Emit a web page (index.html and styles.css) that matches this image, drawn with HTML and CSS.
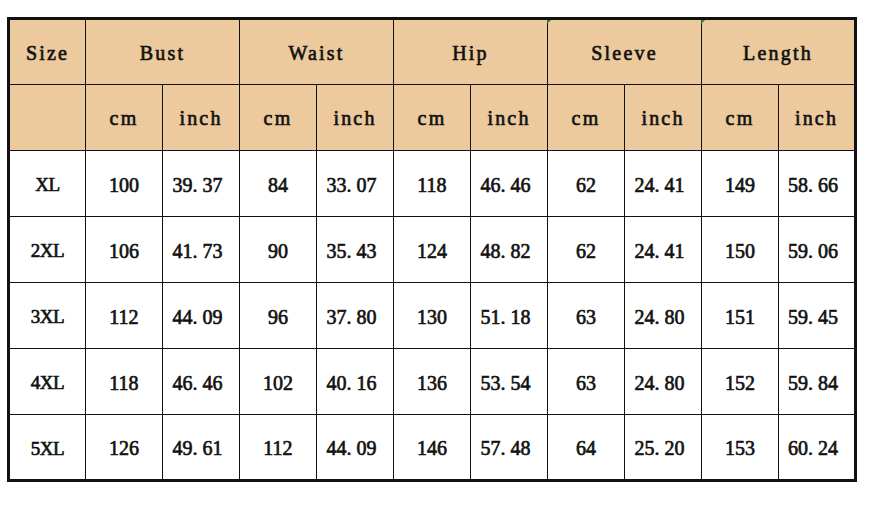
FILE: index.html
```html
<!DOCTYPE html>
<html lang="en">
<head>
<meta charset="utf-8">
<title>Size chart</title>
<link rel="stylesheet" href="styles.css">
</head>
<body>
<div class="chart">
  <div class="hd">Size</div>
  <div class="hd span2">Bust</div>
  <div class="hd span2">Waist</div>
  <div class="hd span2">Hip</div>
  <div class="hd span2 mark">Sleeve</div>
  <div class="hd span2 mark">Length</div>

  <div class="hd"></div>
  <div class="hd">cm</div><div class="hd">inch</div>
  <div class="hd">cm</div><div class="hd">inch</div>
  <div class="hd">cm</div><div class="hd">inch</div>
  <div class="hd">cm</div><div class="hd">inch</div>
  <div class="hd">cm</div><div class="hd">inch</div>

  <div class="c sz">XL</div>
  <div class="c">100</div><div class="c d">39<span class="dot">.</span>37</div>
  <div class="c">84</div><div class="c d">33<span class="dot">.</span>07</div>
  <div class="c">118</div><div class="c d">46<span class="dot">.</span>46</div>
  <div class="c">62</div><div class="c d">24<span class="dot">.</span>41</div>
  <div class="c">149</div><div class="c d">58<span class="dot">.</span>66</div>

  <div class="c sz">2XL</div>
  <div class="c">106</div><div class="c d">41<span class="dot">.</span>73</div>
  <div class="c">90</div><div class="c d">35<span class="dot">.</span>43</div>
  <div class="c">124</div><div class="c d">48<span class="dot">.</span>82</div>
  <div class="c">62</div><div class="c d">24<span class="dot">.</span>41</div>
  <div class="c">150</div><div class="c d">59<span class="dot">.</span>06</div>

  <div class="c sz">3XL</div>
  <div class="c">112</div><div class="c d">44<span class="dot">.</span>09</div>
  <div class="c">96</div><div class="c d">37<span class="dot">.</span>80</div>
  <div class="c">130</div><div class="c d">51<span class="dot">.</span>18</div>
  <div class="c">63</div><div class="c d">24<span class="dot">.</span>80</div>
  <div class="c">151</div><div class="c d">59<span class="dot">.</span>45</div>

  <div class="c sz">4XL</div>
  <div class="c">118</div><div class="c d">46<span class="dot">.</span>46</div>
  <div class="c">102</div><div class="c d">40<span class="dot">.</span>16</div>
  <div class="c">136</div><div class="c d">53<span class="dot">.</span>54</div>
  <div class="c">63</div><div class="c d">24<span class="dot">.</span>80</div>
  <div class="c">152</div><div class="c d">59<span class="dot">.</span>84</div>

  <div class="c sz">5XL</div>
  <div class="c">126</div><div class="c d">49<span class="dot">.</span>61</div>
  <div class="c">112</div><div class="c d">44<span class="dot">.</span>09</div>
  <div class="c">146</div><div class="c d">57<span class="dot">.</span>48</div>
  <div class="c">64</div><div class="c d">25<span class="dot">.</span>20</div>
  <div class="c">153</div><div class="c d">60<span class="dot">.</span>24</div>
</div>
</body>
</html>
```

FILE: styles.css
```css
html, body {
  margin: 0;
  padding: 0;
  background: #ffffff;
}

body {
  padding: 17px 0 0 7px;
}

.chart {
  display: grid;
  width: 844px;
  grid-template-columns: 75px repeat(9, 76px) 75px;
  grid-template-rows: 64px repeat(5, 65px) 64px;
  gap: 1px;
  background: #111111;
  border: 3px solid #111111;
}

.hd,
.c {
  display: flex;
  align-items: center;
  justify-content: center;
  color: #121212;
  font-family: "Liberation Serif", "Times New Roman", serif;
  font-weight: 400;
  -webkit-text-stroke: 0.65px #121212;
}

.hd {
  position: relative;
  background: #ecca9e;
  font-size: 20px;
  letter-spacing: 2.2px;
  padding-top: 2px;
}

.span2 {
  grid-column: span 2;
}

.mark::before {
  content: "";
  position: absolute;
  left: -1px;
  top: 0;
  width: 0;
  height: 0;
  border-top: 4px solid #2f7d2a;
  border-right: 4px solid transparent;
}

.c {
  background: #ffffff;
  font-size: 20px;
  padding-top: 3px;
}

.d {
  padding-right: 7px;
}

.sz {
  font-size: 19px;
  letter-spacing: -0.5px;
}

.dot {
  display: inline-block;
  width: 10px;
  text-align: left;
}
```
